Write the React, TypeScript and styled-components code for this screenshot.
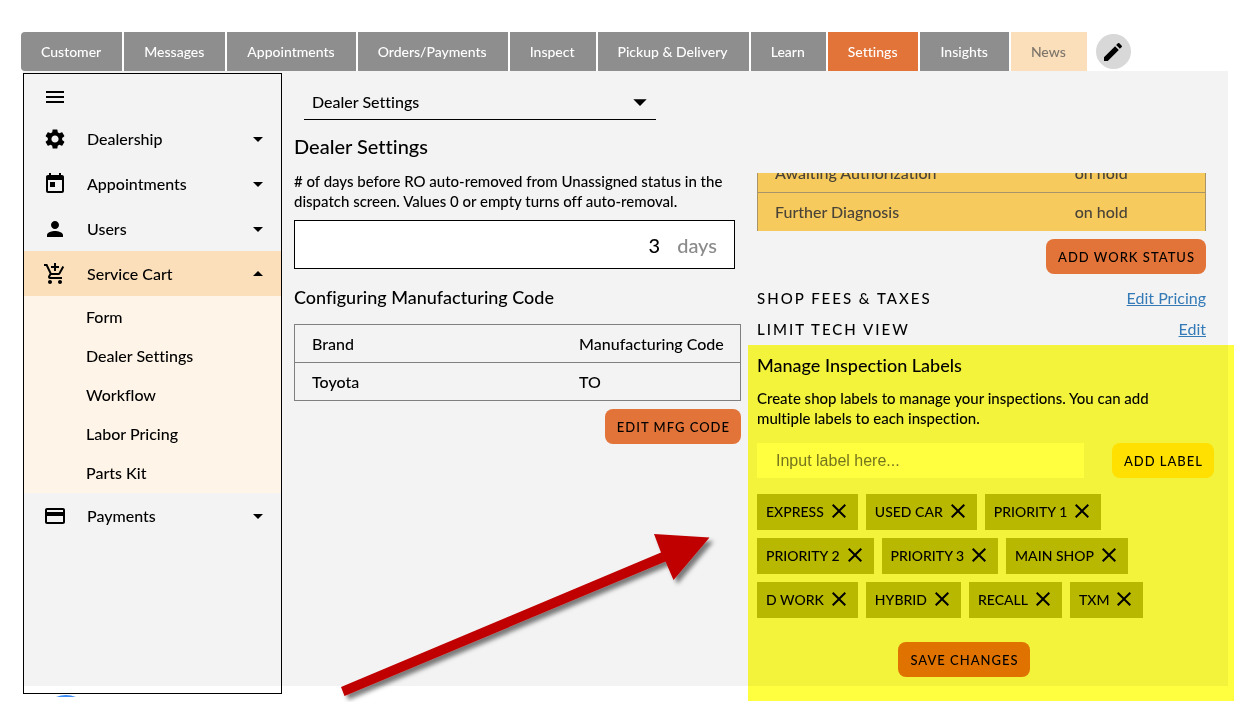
import React from "react";
import styled, { createGlobalStyle } from "styled-components";
import {
  MdAddShoppingCart,
  MdArrowDropDown,
  MdArrowDropUp,
  MdClose,
  MdMenu,
  MdModeEdit,
  MdPayment,
  MdPerson,
  MdSettings,
  MdToday,
} from "react-icons/md";

const colors = {
  panel: "#f3f3f3",
  tab: "#8e8e8e",
  orange: "#e27339",
  peach: "#fbdfba",
  cream: "#fef4e7",
  amber: "#f6ca5d",
  line: "#808080",
  link: "#337ab7",
  highlight: "#ffff3f",
};

const GlobalStyle = createGlobalStyle`
  * { box-sizing: border-box; }
  body {
    margin: 0;
    background: #fff;
    color: #000;
    font: 500 16px/20px Lato, "Liberation Sans", sans-serif;
    font-variant-ligatures: none;
  }
  button, input, select { font: inherit; font-variant-ligatures: none; color: inherit; }
  button { cursor: pointer; }
  h1, h2, p, ul { margin: 0; padding: 0; }
  ul { list-style: none; }
`;

const Page = styled.div`
  padding: 32px 20px 16px 21px;
`;

const Tabs = styled.nav`
  display: flex;
  gap: 2px;
  align-items: stretch;
  height: 39px;
`;

const Tab = styled.a<{ $tone?: "active" | "news" }>`
  display: flex;
  align-items: center;
  padding: 0 21px 0 20px;
  font-size: 14px;
  white-space: nowrap;
  text-decoration: none;
  color: ${(p) => (p.$tone === "news" ? "#7d756a" : "#fff")};
  background: ${(p) =>
    p.$tone === "active" ? colors.orange : p.$tone === "news" ? colors.peach : colors.tab};
  &:first-child { border-radius: 4px 0 0 4px; }
`;

const EditTabs = styled.button`
  display: grid;
  place-items: center;
  align-self: center;
  width: 35px;
  height: 35px;
  margin-left: 7px;
  padding: 0;
  border: 0;
  border-radius: 50%;
  background: #d8d8d8;
`;

const Workspace = styled.div`
  position: relative;
  display: grid;
  grid-template-columns: 259px minmax(0, 1fr);
  min-height: 615px;
  margin: 0 6px 0 2px;
  background: ${colors.panel};
`;

const Sidebar = styled.aside`
  margin: 2px 0 -8px;
  border: 1px solid #000;
`;

const MenuButton = styled.button`
  display: block;
  height: 42px;
  padding: 8px 19px 0;
  border: 0;
  background: none;
`;

const Group = styled.button<{ $open?: boolean }>`
  display: grid;
  grid-template-columns: 24px 1fr 24px;
  column-gap: 20px;
  align-items: center;
  width: 100%;
  height: 45px;
  padding: 0 11px 0 19px;
  border: 0;
  text-align: left;
  background: ${(p) => (p.$open ? colors.peach : "none")};
`;

const SubList = styled.ul`
  padding: 1px 0;
  background: ${colors.cream};
`;

const SubLink = styled.a`
  display: flex;
  align-items: center;
  height: 39px;
  padding-left: 62px;
  color: inherit;
  text-decoration: none;
`;

const Content = styled.main`
  display: grid;
  grid-template-columns: minmax(0, 447fr) minmax(0, 449fr);
  column-gap: 16px;
  align-items: start;
  padding: 14px 22px 0 12px;
`;

const Column = styled.section`
  display: flex;
  flex-direction: column;
`;

const PickerWrap = styled.div`
  display: grid;
  align-items: center;
  width: 352px;
  margin-left: 10px;
  border-bottom: 1px solid #000;
  svg {
    grid-area: 1 / 1;
    justify-self: end;
    pointer-events: none;
  }
`;

const Picker = styled.select`
  grid-area: 1 / 1;
  appearance: none;
  height: 34px;
  padding: 0 32px 0 8px;
  border: 0;
  background: none;
`;

const Title = styled.h1`
  margin-top: 13px;
  font-size: 20px;
  font-weight: 500;
  line-height: 26px;
`;

const Heading = styled.h2`
  font-size: 18px;
  font-weight: 500;
  line-height: 24px;
`;

const DaysLabel = styled.label`
  margin-top: 12px;
  font-size: 15px;
`;

const DaysBox = styled.div`
  display: flex;
  align-items: center;
  gap: 17px;
  height: 49px;
  margin: 9px 6px 16px 0;
  padding: 0 17px;
  border: 1px solid #000;
  background: #fff;
  font-size: 20px;
  span { color: #8a8a8a; }
`;

const DaysInput = styled.input`
  flex: 1;
  min-width: 0;
  padding: 0;
  border: 0;
  background: none;
  text-align: right;
`;

const CodeTable = styled.table`
  margin-top: 15px;
  border-collapse: collapse;
  border: 1px solid ${colors.line};
  text-align: left;
  th, td {
    height: 38px;
    padding: 0 0 0 17px;
    border-bottom: 1px solid ${colors.line};
    font-weight: 500;
  }
  th:first-child { width: 60%; }
`;

const ActionButton = styled.button<{ $fill?: string }>`
  height: 35px;
  padding: 0 11px 0 12px;
  border: 0;
  border-radius: 8px;
  background: ${(p) => p.$fill ?? colors.orange};
  font-size: 13px;
  letter-spacing: 1px;
  white-space: nowrap;
`;

const EndRow = styled.div`
  display: flex;
  justify-content: flex-end;
  margin-top: 8px;
`;

const StatusScroller = styled.div`
  display: flex;
  flex-direction: column;
  justify-content: flex-end;
  height: 58px;
  margin-top: 88px;
  overflow: hidden;
`;

const StatusTable = styled.table`
  flex: none;
  border-collapse: collapse;
  background: ${colors.amber};
  color: #4a4338;
  td {
    height: 39px;
    padding: 0 0 0 17px;
    border: 1px solid #a8946a;
    border-width: 1px 0 0;
  }
  td:first-child { width: 67%; border-left-width: 1px; }
  td:last-child { border-right-width: 1px; }
`;

const OptionRow = styled.div`
  display: flex;
  justify-content: space-between;
  height: 31px;
  align-items: center;
  span { font-size: 15px; letter-spacing: 2px; }
  a { color: ${colors.link}; font-weight: 400; }
`;

const Options = styled.div`
  margin-top: 8px;
`;

/* Marker-pen wash laid over the whole label section */
const Highlighted = styled.section`
  position: relative;
  margin: 9px -8px 0 0;
  &::after {
    content: "";
    position: absolute;
    inset: -8px -20px -24px -9px;
    background: ${colors.highlight};
    mix-blend-mode: multiply;
    pointer-events: none;
  }
`;

const Hint = styled.p`
  margin: 11px 0 15px;
  padding-right: 32px;
  font-size: 15px;
`;

const LabelForm = styled.form`
  display: flex;
  gap: 28px;
`;

const LabelInput = styled.input`
  flex: 1;
  min-width: 0;
  height: 35px;
  padding: 0 19px;
  border: 0;
  background: #fff;
  font-family: "Liberation Sans", sans-serif;
  &::placeholder { color: #757575; opacity: 1; }
`;

const TagList = styled.ul`
  display: flex;
  flex-wrap: wrap;
  gap: 8px;
  margin: 16px 60px 24px 0;
`;

const Tag = styled.li`
  display: flex;
  align-items: center;
  gap: 3px;
  height: 36px;
  padding: 0 7px 0 9px;
  background: #b8b800;
  font-size: 14px;
  button {
    display: flex;
    padding: 0 0 2px;
    border: 0;
    background: none;
  }
`;

const SaveRow = styled.div`
  display: flex;
  justify-content: center;
  padding-right: 43px;
`;

const Pointer = styled.svg`
  position: absolute;
  left: 312px;
  top: 456px;
  pointer-events: none;
`;

const ChatPeek = styled.div`
  position: absolute;
  left: 17px;
  top: 624px;
  width: 52px;
  height: 2px;
  overflow: hidden;
  &::before {
    content: "";
    display: block;
    height: 52px;
    border-radius: 50%;
    background: #3b8cf5;
  }
`;

const tabs: { name: string; tone?: "active" | "news" }[] = [
  { name: "Customer" },
  { name: "Messages" },
  { name: "Appointments" },
  { name: "Orders/Payments" },
  { name: "Inspect" },
  { name: "Pickup & Delivery" },
  { name: "Learn" },
  { name: "Settings", tone: "active" },
  { name: "Insights" },
  { name: "News", tone: "news" },
];

const groups = [
  { name: "Dealership", Icon: MdSettings },
  { name: "Appointments", Icon: MdToday },
  { name: "Users", Icon: MdPerson },
  {
    name: "Service Cart",
    Icon: MdAddShoppingCart,
    items: ["Form", "Dealer Settings", "Workflow", "Labor Pricing", "Parts Kit"],
  },
  { name: "Payments", Icon: MdPayment },
];

const labels = [
  "EXPRESS", "USED CAR", "PRIORITY 1", "PRIORITY 2", "PRIORITY 3",
  "MAIN SHOP", "D WORK", "HYBRID", "RECALL", "TXM",
];

export default function App() {
  return (
    <Page>
      <GlobalStyle />
      <Tabs>
        {tabs.map((t) => (
          <Tab key={t.name} href="#" $tone={t.tone}>{t.name}</Tab>
        ))}
        <EditTabs aria-label="Edit tabs"><MdModeEdit size={24} /></EditTabs>
      </Tabs>

      <Workspace>
        <Sidebar>
          <MenuButton aria-label="Menu"><MdMenu size={24} /></MenuButton>
          {groups.map(({ name, Icon, items }) => (
            <React.Fragment key={name}>
              <Group $open={!!items} aria-expanded={!!items}>
                <Icon size={24} />
                {name}
                {items ? <MdArrowDropUp size={24} /> : <MdArrowDropDown size={24} />}
              </Group>
              {items && (
                <SubList>
                  {items.map((item) => (
                    <li key={item}><SubLink href="#">{item}</SubLink></li>
                  ))}
                </SubList>
              )}
            </React.Fragment>
          ))}
        </Sidebar>

        <Content>
          <Column>
            <PickerWrap>
              <Picker aria-label="Settings page" defaultValue="dealer">
                <option value="dealer">Dealer Settings</option>
              </Picker>
              <MdArrowDropDown size={32} />
            </PickerWrap>
            <Title>Dealer Settings</Title>
            <DaysLabel htmlFor="days">
              # of days before RO auto-removed from Unassigned status in the dispatch
              screen. Values 0 or empty turns off auto-removal.
            </DaysLabel>
            <DaysBox>
              <DaysInput id="days" defaultValue="3" />
              <span>days</span>
            </DaysBox>
            <Heading>Configuring Manufacturing Code</Heading>
            <CodeTable>
              <thead>
                <tr><th>Brand</th><th>Manufacturing Code</th></tr>
              </thead>
              <tbody>
                <tr><td>Toyota</td><td>TO</td></tr>
              </tbody>
            </CodeTable>
            <EndRow><ActionButton>EDIT MFG CODE</ActionButton></EndRow>
          </Column>

          <Column>
            <StatusScroller>
              <StatusTable>
                <tbody>
                  <tr><td>Awaiting Authorization</td><td>on hold</td></tr>
                  <tr><td>Further Diagnosis</td><td>on hold</td></tr>
                </tbody>
              </StatusTable>
            </StatusScroller>
            <EndRow><ActionButton>ADD WORK STATUS</ActionButton></EndRow>
            <Options>
              <OptionRow><span>SHOP FEES &amp; TAXES</span><a href="#">Edit Pricing</a></OptionRow>
              <OptionRow><span>LIMIT TECH VIEW</span><a href="#">Edit</a></OptionRow>
            </Options>
            <Highlighted>
              <Heading>Manage Inspection Labels</Heading>
              <Hint>
                Create shop labels to manage your inspections. You can add multiple labels
                to each inspection.
              </Hint>
              <LabelForm onSubmit={(e) => e.preventDefault()}>
                <LabelInput aria-label="New label" placeholder="Input label here..." />
                <ActionButton $fill="#ffe000">ADD LABEL</ActionButton>
              </LabelForm>
              <TagList>
                {labels.map((label) => (
                  <Tag key={label}>
                    {label}
                    <button aria-label={`Remove ${label}`}><MdClose size={24} /></button>
                  </Tag>
                ))}
              </TagList>
              <SaveRow><ActionButton $fill="#e07300">SAVE CHANGES</ActionButton></SaveRow>
            </Highlighted>
          </Column>
        </Content>

        <ChatPeek />
        <Pointer width="390" height="180" viewBox="0 0 390 180" aria-hidden="true">
          <defs>
            <filter id="pointer-shadow" x="-10%" y="-10%" width="120%" height="125%">
              <feDropShadow dx="4" dy="4" stdDeviation="2" floodColor="#000" floodOpacity="0.5" />
            </filter>
          </defs>
          <path
            d="M6 160 L326 25.500 L319 7 L374.500 10.500 L338.500 53 L330.500 34.500 L9.500 169 Z"
            fill="#c00000"
            filter="url(#pointer-shadow)"
          />
        </Pointer>
      </Workspace>
    </Page>
  );
}
